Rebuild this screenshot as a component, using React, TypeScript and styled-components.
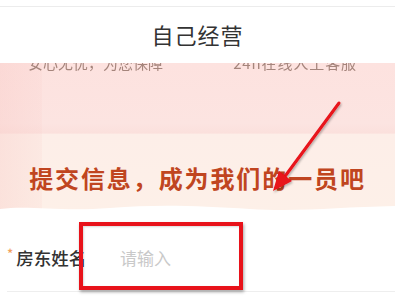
import React from "react";
import styled, { createGlobalStyle } from "styled-components";

const Global = createGlobalStyle`
  html, body { margin: 0; padding: 0; background: #ffffff; }
  body { font-family: "Noto Sans CJK SC", "Noto Sans", sans-serif; overflow: hidden; }
`;

const Page = styled.div`
  position: relative;
  width: 395px;
  height: 308px;
  background: #ffffff;
  overflow: hidden;
`;

const Header = styled.header`
  position: relative;
  z-index: 2;
  height: 57px;
  box-sizing: border-box;
  margin-top: 6px;
  border-top: 1px solid #ececec;
  background: #ffffff;
  display: flex;
  align-items: center;
  justify-content: center;
`;

const Title = styled.h1`
  margin: 0;
  margin-top: -2px;
  font-size: 22px;
  font-weight: 400;
  letter-spacing: 1px;
  color: #333333;
`;

const Banner = styled.section`
  position: relative;
  height: 152px;
  overflow: hidden;
  background: linear-gradient(180deg, #fde2df 0%, #fce4e1 40%, #fbe0dc 46%, #fdeee8 47%, #fdf0e8 100%);
`;

const LeftShade = styled.div`
  position: absolute;
  left: 0;
  top: 0;
  bottom: 0;
  width: 42px;
  background: linear-gradient(90deg, rgba(248, 200, 196, 0.35), rgba(248, 200, 196, 0.15));
`;

const Perks = styled.div`
  position: relative;
  display: flex;
  justify-content: space-between;
  padding: 0 38px 0 28px;
  margin-top: -10px;
  font-size: 15px;
  line-height: 20px;
  color: #a5857c;
  filter: blur(0.3px);
`;

const Perk = styled.span<{ $spacing?: number }>`
  letter-spacing: ${(p) => p.$spacing ?? 0}px;
`;

const Headline = styled.h2`
  position: relative;
  margin: 0;
  margin-top: 87px;
  text-align: center;
  font-size: 24px;
  font-weight: 700;
  letter-spacing: 1.9px;
  color: #c04520;
`;

const Wave = styled.svg`
  position: absolute;
  left: 0;
  bottom: 0;
  width: 100%;
  height: 12px;
  display: block;
`;

const FormRow = styled.div`
  display: flex;
  align-items: center;
  height: 77px;
  box-sizing: border-box;
  padding-top: 9px;
  margin-left: 7px;
  border-bottom: 1px solid #eeeeee;
`;

const Label = styled.label`
  display: flex;
  align-items: flex-start;
  width: 113px;
  font-size: 17.5px;
  color: #333333;
  font-weight: 500;
`;

const Star = styled.span`
  color: #f2a15e;
  font-size: 13px;
  line-height: 18px;
  margin-right: 3px;
`;

const Input = styled.input`
  border: none;
  outline: none;
  background: transparent;
  padding: 0;
  font-size: 17px;
  font-family: inherit;
  color: #333;
  width: 200px;
  &::placeholder { color: #c9c9c9; }
`;

const Highlight = styled.div`
  position: absolute;
  left: 79px;
  top: 222px;
  width: 164px;
  height: 68px;
  box-sizing: border-box;
  border: 4px solid #e8121a;
  box-shadow: 1px 2px 3px rgba(0, 0, 0, 0.35), inset 1px 1px 2px rgba(0, 0, 0, 0.15);
  pointer-events: none;
`;

const Arrow = styled.svg`
  position: absolute;
  left: 0;
  top: 0;
  width: 395px;
  height: 308px;
  pointer-events: none;
  z-index: 3;
`;

export default function App() {
  return (
    <Page>
      <Global />
      <Header>
        <Title>自己经营</Title>
      </Header>
      <Banner>
        <LeftShade />
        <Perks>
          <Perk>安心无忧，为您保障</Perk>
          <Perk $spacing={0.9}>24h在线人工客服</Perk>
        </Perks>
        <Headline>提交信息，成为我们的一员吧</Headline>
        <Wave viewBox="0 0 395 12" preserveAspectRatio="none">
          <path
            d="M0 6 C 30 2, 60 9, 110 5 S 200 3, 250 6 S 340 4, 395 3 L395 12 L0 12 Z"
            fill="#ffffff"
          />
        </Wave>
      </Banner>
      <FormRow>
        <Label>
          <Star>*</Star>房东姓名
        </Label>
        <Input placeholder="请输入" />
      </FormRow>
      <Highlight />
      <Arrow viewBox="0 0 395 308">
        <defs>
          <filter id="sh" x="-20%" y="-20%" width="140%" height="140%">
            <feDropShadow dx="1" dy="1.5" stdDeviation="1" floodColor="#000" floodOpacity="0.3" />
          </filter>
        </defs>
        <g filter="url(#sh)">
          <line x1="339" y1="103" x2="283" y2="179" stroke="#e8121a" strokeWidth="3" strokeLinecap="round" />
          <path d="M273 191 L279 171 L292 181 Z" fill="#e8121a" />
        </g>
      </Arrow>
    </Page>
  );
}
